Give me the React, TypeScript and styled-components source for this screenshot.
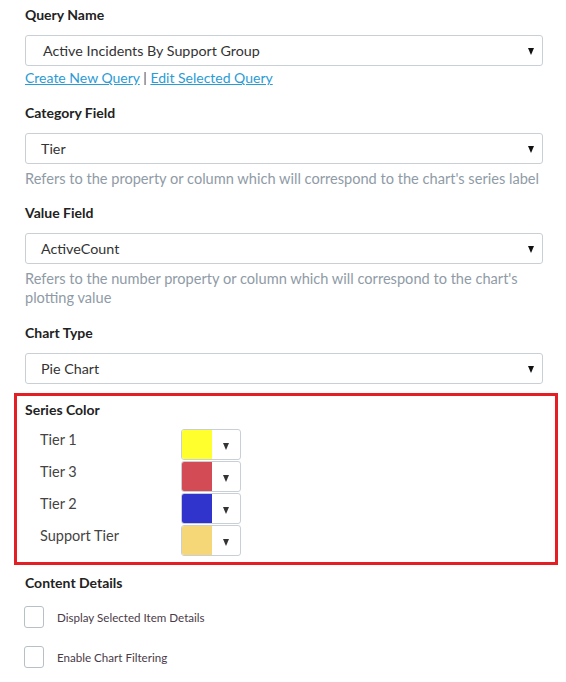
import React from 'react';
import styled, { createGlobalStyle } from 'styled-components';

const GlobalStyle = createGlobalStyle`
	body {
		margin: 0;
		background: #fff;
		font-family: Lato, 'Noto Sans', sans-serif;
		color: #333;
	}
`;

const Page = styled.div`
	width: 566px;
	padding: 6px 23px 0 25px;
	box-sizing: border-box;
`;

const Label = styled.div`
	font-weight: 700;
	font-size: 14px;
	line-height: 18px;
	color: #222;
`;

const Field = styled.div<{ top?: number }>`
	margin-top: ${p => p.top ?? 0}px;
	${Label} {
		margin-bottom: 11px;
	}
`;

const Select = styled.div<{ indent?: number }>`
	position: relative;
	height: 31px;
	border: 1px solid #c9d0d5;
	border-radius: 3px;
	box-sizing: border-box;
	display: flex;
	align-items: center;
	padding-left: ${p => p.indent ?? 15}px;
	font-size: 14.3px;
	color: #333;
`;

const Arrow = styled.span<{ color?: string }>`
	width: 0;
	height: 0;
	border-left: 3.5px solid transparent;
	border-right: 3.5px solid transparent;
	border-top: 7px solid ${p => p.color ?? '#111'};
`;

const SelectArrow = styled(Arrow)`
	position: absolute;
	right: 8px;
	top: 12px;
`;

const Links = styled.div`
	margin-top: 2px;
	font-size: 14px;
	line-height: 20px;
	color: #555;
	a {
		color: #2a9bd6;
		text-decoration: underline;
	}
`;

const Help = styled.div`
	font-size: 14.6px;
	line-height: 19px;
	color: #8f9ba6;
	margin-top: 5px;
`;

const Highlight = styled.div`
	margin: 9px -15px 0 -11px;
	border: 3px solid #e31e24;
	padding: 5px 8px 5px 8px;
	${Label} {
		margin-bottom: 10px;
	}
`;

const ColorRow = styled.div`
	display: flex;
	align-items: flex-start;
	height: 32px;
`;

const RowLabel = styled.div`
	width: 141px;
	padding-left: 15px;
	padding-top: 1px;
	font-size: 14.5px;
	line-height: 20px;
	color: #444;
`;

const Swatch = styled.div`
	width: 60px;
	height: 31px;
	border: 1px solid #c9d0d5;
	border-radius: 3px;
	box-sizing: border-box;
	display: flex;
	overflow: hidden;
`;

const SwatchColor = styled.div<{ color: string }>`
	width: 30px;
	background: ${p => p.color};
`;

const SwatchButton = styled.div`
	flex: 1;
	display: flex;
	align-items: center;
	justify-content: center;
	padding-top: 3px;
`;

const Checks = styled.div`
	margin-top: 9px;
	${Label} {
		margin-bottom: 14px;
	}
`;

const CheckRow = styled.label`
	display: flex;
	align-items: center;
	gap: 13px;
	height: 22px;
	margin-bottom: 18px;
	font-size: 11.6px;
	color: #4a3b48;
`;

const Box = styled.span`
	width: 20px;
	height: 22px;
	border: 1px solid #b7c0c7;
	border-radius: 3px;
	box-sizing: border-box;
	margin-left: -1px;
`;

const series = [
	{ name: 'Tier 1', color: '#ffff2e' },
	{ name: 'Tier 3', color: '#d24b55' },
	{ name: 'Tier 2', color: '#3033cc' },
	{ name: 'Support Tier', color: '#f6d778' }
];

export default function App() {
	return (
		<Page>
			<GlobalStyle />
			<Field>
				<Label>Query Name</Label>
				<Select indent={17}>
					Active Incidents By Support Group
					<SelectArrow />
				</Select>
				<Links>
					<a>Create New Query</a> | <a>Edit Selected Query</a>
				</Links>
			</Field>
			<Field top={16}>
				<Label>Category Field</Label>
				<Select>
					Tier
					<SelectArrow />
				</Select>
				<Help>Refers to the property or column which will correspond to the chart's series label</Help>
			</Field>
			<Field top={16}>
				<Label>Value Field</Label>
				<Select>
					ActiveCount
					<SelectArrow />
				</Select>
				<Help>
					Refers to the number property or column which will correspond to the chart's plotting value
				</Help>
			</Field>
			<Field top={17}>
				<Label>Chart Type</Label>
				<Select>
					Pie Chart
					<SelectArrow />
				</Select>
			</Field>
			<Highlight>
				<Label>Series Color</Label>
				{series.map(s => (
					<ColorRow key={s.name}>
						<RowLabel>{s.name}</RowLabel>
						<Swatch>
							<SwatchColor color={s.color} />
							<SwatchButton>
								<Arrow color="#333" />
							</SwatchButton>
						</Swatch>
					</ColorRow>
				))}
			</Highlight>
			<Checks>
				<Label>Content Details</Label>
				<CheckRow>
					<Box />
					Display Selected Item Details
				</CheckRow>
				<CheckRow>
					<Box />
					Enable Chart Filtering
				</CheckRow>
			</Checks>
		</Page>
	);
}
